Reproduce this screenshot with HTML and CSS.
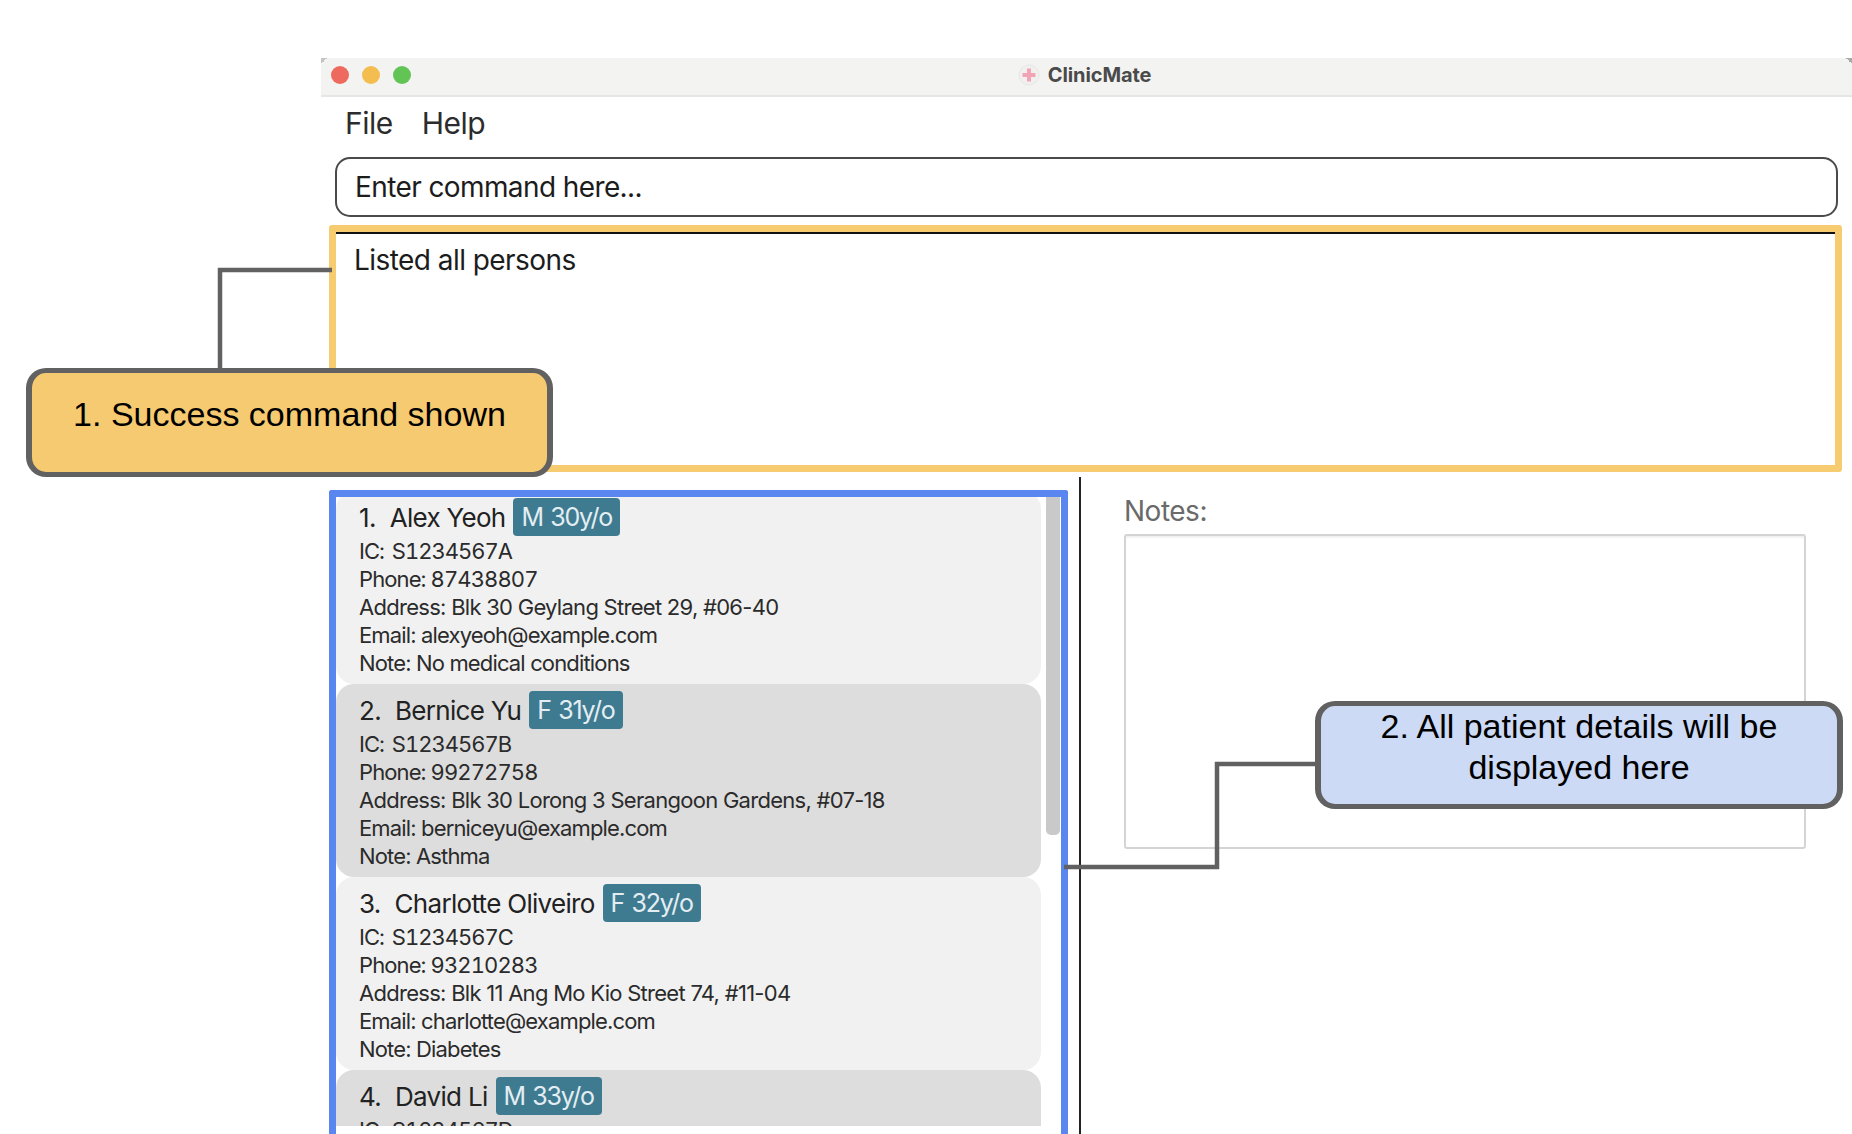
FILE: index.html
```html
<!DOCTYPE html>
<html lang="en">
<head>
    <meta charset="UTF-8">
    <title>ClinicMate</title>
    <link rel="stylesheet" href="styles.css">
</head>
<body>
    <div class="app">
        <div class="title-bar">
            <div class="lights">
                <span class="light red"></span>
                <span class="light yellow"></span>
                <span class="light green"></span>
            </div>
            <div class="title">
                <svg class="app-icon" width="22" height="22" viewBox="0 0 22 22">
                    <circle cx="11" cy="11" r="10" fill="#f1f0ee" stroke="#e6e6e6"/>
                    <path d="M9 4.500h4V9h4.500v4H13v4.500H9V13H4.500V9H9z" fill="#f2a3b5"/>
                </svg>
                <span>ClinicMate</span>
            </div>
        </div>

        <div class="menu-bar">
            <span>File</span>
            <span>Help</span>
        </div>

        <div class="command-box">Enter command here...</div>

        <div class="result-box">
            <div class="result-text">Listed all persons</div>
        </div>

        <div class="lower">
            <div class="list-col">
                <div class="list-panel">
                    <div class="list">
                        <div class="card">
                            <div class="name-row"><span class="index">1.</span><span class="name">Alex Yeoh</span><span class="badge">M 30y/o</span></div>
                            <div class="line ic">IC: S1234567A</div>
                            <div class="line phone">Phone: 87438807</div>
                            <div class="line address">Address: Blk 30 Geylang Street 29, #06-40</div>
                            <div class="line">Email: alexyeoh@example.com</div>
                            <div class="line">Note: No medical conditions</div>
                        </div>
                        <div class="card alt">
                            <div class="name-row"><span class="index">2.</span><span class="name">Bernice Yu</span><span class="badge">F 31y/o</span></div>
                            <div class="line ic">IC: S1234567B</div>
                            <div class="line phone">Phone: 99272758</div>
                            <div class="line address">Address: Blk 30 Lorong 3 Serangoon Gardens, #07-18</div>
                            <div class="line">Email: berniceyu@example.com</div>
                            <div class="line">Note: Asthma</div>
                        </div>
                        <div class="card">
                            <div class="name-row"><span class="index">3.</span><span class="name">Charlotte Oliveiro</span><span class="badge">F 32y/o</span></div>
                            <div class="line ic">IC: S1234567C</div>
                            <div class="line phone">Phone: 93210283</div>
                            <div class="line address">Address: Blk 11 Ang Mo Kio Street 74, #11-04</div>
                            <div class="line">Email: charlotte@example.com</div>
                            <div class="line">Note: Diabetes</div>
                        </div>
                        <div class="card alt">
                            <div class="name-row"><span class="index">4.</span><span class="name">David Li</span><span class="badge">M 33y/o</span></div>
                            <div class="line ic">IC: S1234567D</div>
                        </div>
                    </div>
                    <div class="scrollbar"></div>
                </div>
            </div>
            <div class="details">
                <div class="notes-label">Notes:</div>
                <div class="notes-box"></div>
            </div>
        </div>
    </div>

    <svg class="connectors" width="1852" height="1134" viewBox="0 0 1852 1134">
        <path d="M332 270H220V370"/>
        <path d="M1318 764H1217V867H1064"/>
    </svg>

    <div class="callout callout-yellow">1. Success command shown</div>
    <div class="callout callout-blue">2. All patient details will be<br>displayed here</div>
</body>
</html>
```

FILE: styles.css
```css
html, body {
    margin: 0;
    height: 1134px;
    overflow: hidden;
    background: #fff;
}
body {
    position: relative;
    font-family: Inter, "Noto Sans", sans-serif;
    color: #1c1c1c;
}

.app {
    display: flex;
    flex-direction: column;
    box-sizing: border-box;
    width: 1531px;
    height: 1076px;
    margin: 58px 0 0 321px;
}

.title-bar {
    position: relative;
    display: flex;
    align-items: center;
    justify-content: center;
    flex: none;
    box-sizing: border-box;
    height: 39px;
    background: #f3f3f1;
    border-bottom: 2px solid #e6e6e6;
}
.title-bar::before,
.title-bar::after {
    content: "";
    position: absolute;
    top: 0;
    width: 6px;
    height: 6px;
}
.title-bar::before {
    left: 0;
    background: linear-gradient(135deg, #c4c4c4 50%, transparent 50%);
}
.title-bar::after {
    right: 0;
    background: linear-gradient(225deg, #a9a9a9 50%, transparent 50%);
}
.lights {
    position: absolute;
    left: 10px;
    top: 8px;
    display: flex;
    gap: 13px;
}
.light {
    width: 18px;
    height: 18px;
    border-radius: 50%;
}
.red { background: #ee6a5f; }
.yellow { background: #f4bd4f; }
.green { background: #61c454; }
.title {
    display: flex;
    align-items: center;
    gap: 8px;
    margin: 0 4px 3px 0;
    font-size: 20px;
    font-weight: 700;
    color: #4a4a4a;
    letter-spacing: -0.1px;
}

.menu-bar {
    display: flex;
    flex: none;
    gap: 29px;
    height: 60px;
    padding-left: 24px;
    font-size: 30px;
    line-height: 52px;
    letter-spacing: -0.5px;
    color: #2c2c2c;
}

.command-box {
    flex: none;
    box-sizing: border-box;
    height: 60px;
    margin: 0 14px;
    padding-left: 18px;
    border: 2px solid #4a4a4a;
    border-radius: 15px;
    font-size: 28px;
    line-height: 56px;
    letter-spacing: -0.6px;
}

.result-box {
    flex: none;
    box-sizing: border-box;
    height: 247px;
    margin: 8px 10px 0 8px;
    border: 7px solid #f7cb6f;
    border-radius: 3px;
}
.result-text {
    height: 100%;
    padding: 9px 0 0 18px;
    border-top: 2px solid #111;
    font-size: 28px;
    line-height: 34px;
    letter-spacing: -0.55px;
}

.lower {
    display: flex;
    flex: 1;
    min-height: 0;
    margin-top: 5px;
}
.list-col {
    flex: none;
    box-sizing: border-box;
    width: 758px;
    padding: 13px 11px 0 8px;
}
.list-panel {
    display: flex;
    box-sizing: border-box;
    height: 644px;
    border: 7px solid #5a86ef;
    border-bottom: 0;
    border-radius: 3px 3px 0 0;
}
.list {
    flex: none;
    width: 705px;
    height: 629px;
    overflow: hidden;
}
.card {
    box-sizing: border-box;
    height: 193px;
    padding: 7px 0 0 23px;
    background: #f1f1f1;
    border-radius: 18px;
}
.card:first-child {
    margin-top: -6px;
}
.card.alt {
    background: #dddddd;
}
.name-row {
    display: flex;
    align-items: center;
    height: 39px;
    font-size: 26px;
    letter-spacing: -0.7px;
    color: #222;
}
.index {
    margin-right: 14px;
}
.badge {
    align-self: flex-start;
    box-sizing: border-box;
    height: 38px;
    margin-left: 8px;
    padding: 1px 8px 0;
    background: #3e7b91;
    border-radius: 4px;
    color: #e4eef2;
    font-size: 25px;
    letter-spacing: -1.2px;
    word-spacing: 1.5px;
    line-height: 37px;
}
.line {
    height: 28px;
    font-size: 22px;
    line-height: 28px;
    letter-spacing: -0.85px;
    color: #2b2b2b;
    white-space: nowrap;
}
.line.ic {
    font-variant-numeric: tabular-nums;
    letter-spacing: -1px;
    word-spacing: 3px;
}
.line.phone {
    font-variant-numeric: tabular-nums;
    letter-spacing: -0.9px;
}
.line.address {
    letter-spacing: -0.72px;
}
.scrollbar {
    flex: none;
    width: 14px;
    height: 338px;
    margin-left: 5px;
    background: #c9c9c9;
    border-radius: 0 0 5px 5px;
}

.details {
    flex: 1;
    padding: 0 0 0 43px;
    border-left: 2px solid #222;
}
.notes-label {
    box-sizing: border-box;
    height: 57px;
    padding-top: 12px;
    font-size: 28px;
    line-height: 45px;
    letter-spacing: -0.5px;
    color: #6a6a6a;
}
.notes-box {
    box-sizing: border-box;
    width: 682px;
    height: 315px;
    border: 2px solid #d4d4d4;
    border-radius: 3px;
    box-shadow: inset 0 3px 3px -2px #e8e8e8;
}

/* annotations on top of the app */
.connectors {
    position: absolute;
    left: 0;
    top: 0;
    fill: none;
    stroke: #616161;
    stroke-width: 4.5;
}
.callout {
    position: absolute;
    box-sizing: border-box;
    border: 5px solid #616161;
    border-width: 5px 6px;
    border-radius: 20px;
    color: #000;
    font-family: "Liberation Sans", Arial, sans-serif;
    font-size: 34px;
    line-height: 41px;
    text-align: center;
}
.callout-yellow {
    left: 26px;
    top: 368px;
    width: 527px;
    height: 109px;
    padding-top: 21px;
    background: #f6ca70;
}
.callout-blue {
    left: 1315px;
    top: 701px;
    width: 528px;
    height: 108px;
    background: #ccdaf5;
}
```
